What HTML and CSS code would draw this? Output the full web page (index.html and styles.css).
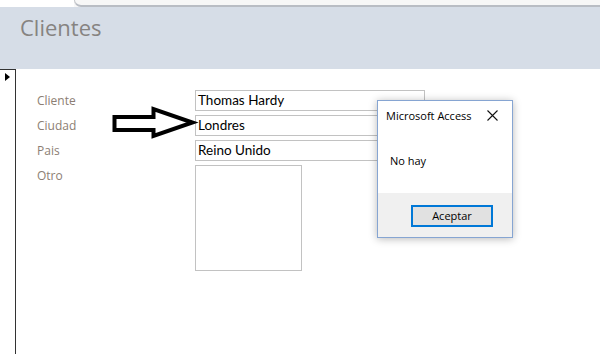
FILE: index.html
```html
<!DOCTYPE html>
<html lang="es">
<head>
<meta charset="utf-8">
<title>Clientes</title>
<link rel="stylesheet" href="styles.css">
</head>
<body>
<div class="app">
  <div class="tabbar">
    <div class="tab"></div>
    <div class="tabrest"></div>
  </div>
  <div class="header">
    <h1 class="title">Clientes</h1>
  </div>
  <div class="main">
    <div class="selector">
      <span class="pointer"></span>
    </div>
    <div class="form">
      <div class="row">
        <span class="label">Cliente</span>
        <div class="field">Thomas Hardy</div>
      </div>
      <div class="row">
        <span class="label">Ciudad</span>
        <div class="field">Londres</div>
      </div>
      <div class="row">
        <span class="label">Pais</span>
        <div class="field">Reino Unido</div>
      </div>
      <div class="row row-tall">
        <span class="label">Otro</span>
        <div class="field field-box"></div>
      </div>
    </div>
  </div>

  <svg class="arrow" width="90" height="40" viewBox="110 104 90 40">
    <polygon points="114.5,117 153.5,117 153.5,109 192.5,122.5 153.5,136 153.5,130 114.5,130" fill="#fff" stroke="#000" stroke-width="4" stroke-linejoin="miter"/>
  </svg>

  <div class="dialog">
    <div class="dlg-title">
      <span>Microsoft Access</span>
      <svg class="close" width="11" height="11" viewBox="0 0 11 11">
        <path d="M0.5 0.5 L10.5 10.5 M10.5 0.5 L0.5 10.5" stroke="#111" stroke-width="1.1" fill="none"/>
      </svg>
    </div>
    <div class="dlg-body">No hay</div>
    <div class="dlg-foot">
      <button class="btn">Aceptar</button>
    </div>
  </div>
</div>
</body>
</html>
```

FILE: styles.css
```css
html, body {
  margin: 0;
  padding: 0;
  background: #fff;
}

.app {
  position: relative;
  width: 600px;
  height: 354px;
  overflow: hidden;
  display: flex;
  flex-direction: column;
  font-family: "Open Sans", "Noto Sans", sans-serif;
}

.tabbar {
  display: flex;
  height: 7px;
  background: #f8f8f8;
}

.tab {
  width: 74px;
  background: #fff;
}

.tabrest {
  flex: 1;
  background: #f7f7f7;
  border-left: 1px solid #c4c6ca;
  border-bottom: 2px solid #b9bdc4;
  border-bottom-left-radius: 7px;
}

.header {
  height: 62px;
  background: #d6dde7;
  padding-left: 20px;
  box-sizing: border-box;
}

.title {
  margin: 0;
  padding-top: 5px;
  font-weight: normal;
  font-size: 22px;
  line-height: 30px;
  color: #868381;
  font-family: "Open Sans", "Noto Sans", sans-serif;
}

.main {
  flex: 1;
  display: flex;
}

.selector {
  width: 15px;
  border-top: 1px solid #333;
  border-right: 1px solid #333;
  position: relative;
}

.pointer {
  display: block;
  width: 0;
  height: 0;
  margin: 3px 0 0 5px;
  border-top: 4px solid transparent;
  border-bottom: 4px solid transparent;
  border-left: 5px solid #000;
}

.form {
  display: flex;
  flex-direction: column;
  gap: 4px;
  padding-top: 21px;
  padding-left: 21px;
}

.row {
  display: flex;
  align-items: flex-start;
}

.label {
  width: 158px;
  font-size: 12px;
  line-height: 21px;
  color: #8c7e73;
}

.field {
  width: 230px;
  height: 21px;
  box-sizing: border-box;
  border: 1px solid #c2c2c2;
  padding-left: 2px;
  font-family: Lato, "Open Sans", sans-serif;
  font-size: 13.5px;
  line-height: 19px;
  color: #000;
  background: #fff;
}

.field-box {
  width: 107px;
  height: 106px;
}

.arrow {
  position: absolute;
  left: 110px;
  top: 104px;
}

.dialog {
  position: absolute;
  left: 377px;
  top: 100px;
  width: 136px;
  height: 138px;
  box-sizing: border-box;
  border: 1px solid #86a5d2;
  background: #fff;
  box-shadow: 0 1px 8px rgba(0, 0, 0, 0.28);
  display: flex;
  flex-direction: column;
  font-family: "Open Sans", "Noto Sans", sans-serif;
  font-size: 11px;
  color: #000;
}

.dlg-title {
  height: 29px;
  display: flex;
  align-items: center;
  justify-content: space-between;
  padding: 0 14px 0 8px;
}

.close {
  display: block;
}

.dlg-body {
  flex: 1;
  padding: 16px 0 0 12px;
  line-height: 30px;
}

.dlg-foot {
  height: 44px;
  background: #f0f0f0;
  display: flex;
  align-items: center;
  justify-content: flex-end;
  padding-right: 19px;
}

.btn {
  width: 82px;
  height: 22px;
  box-sizing: border-box;
  margin-top: 1px;
  border: 1px solid #0078d7;
  box-shadow: inset 0 0 0 1px #0078d7;
  background: #e1e1e1;
  font-family: "Open Sans", "Noto Sans", sans-serif;
  font-size: 11px;
  color: #000;
  padding: 0;
}
```
